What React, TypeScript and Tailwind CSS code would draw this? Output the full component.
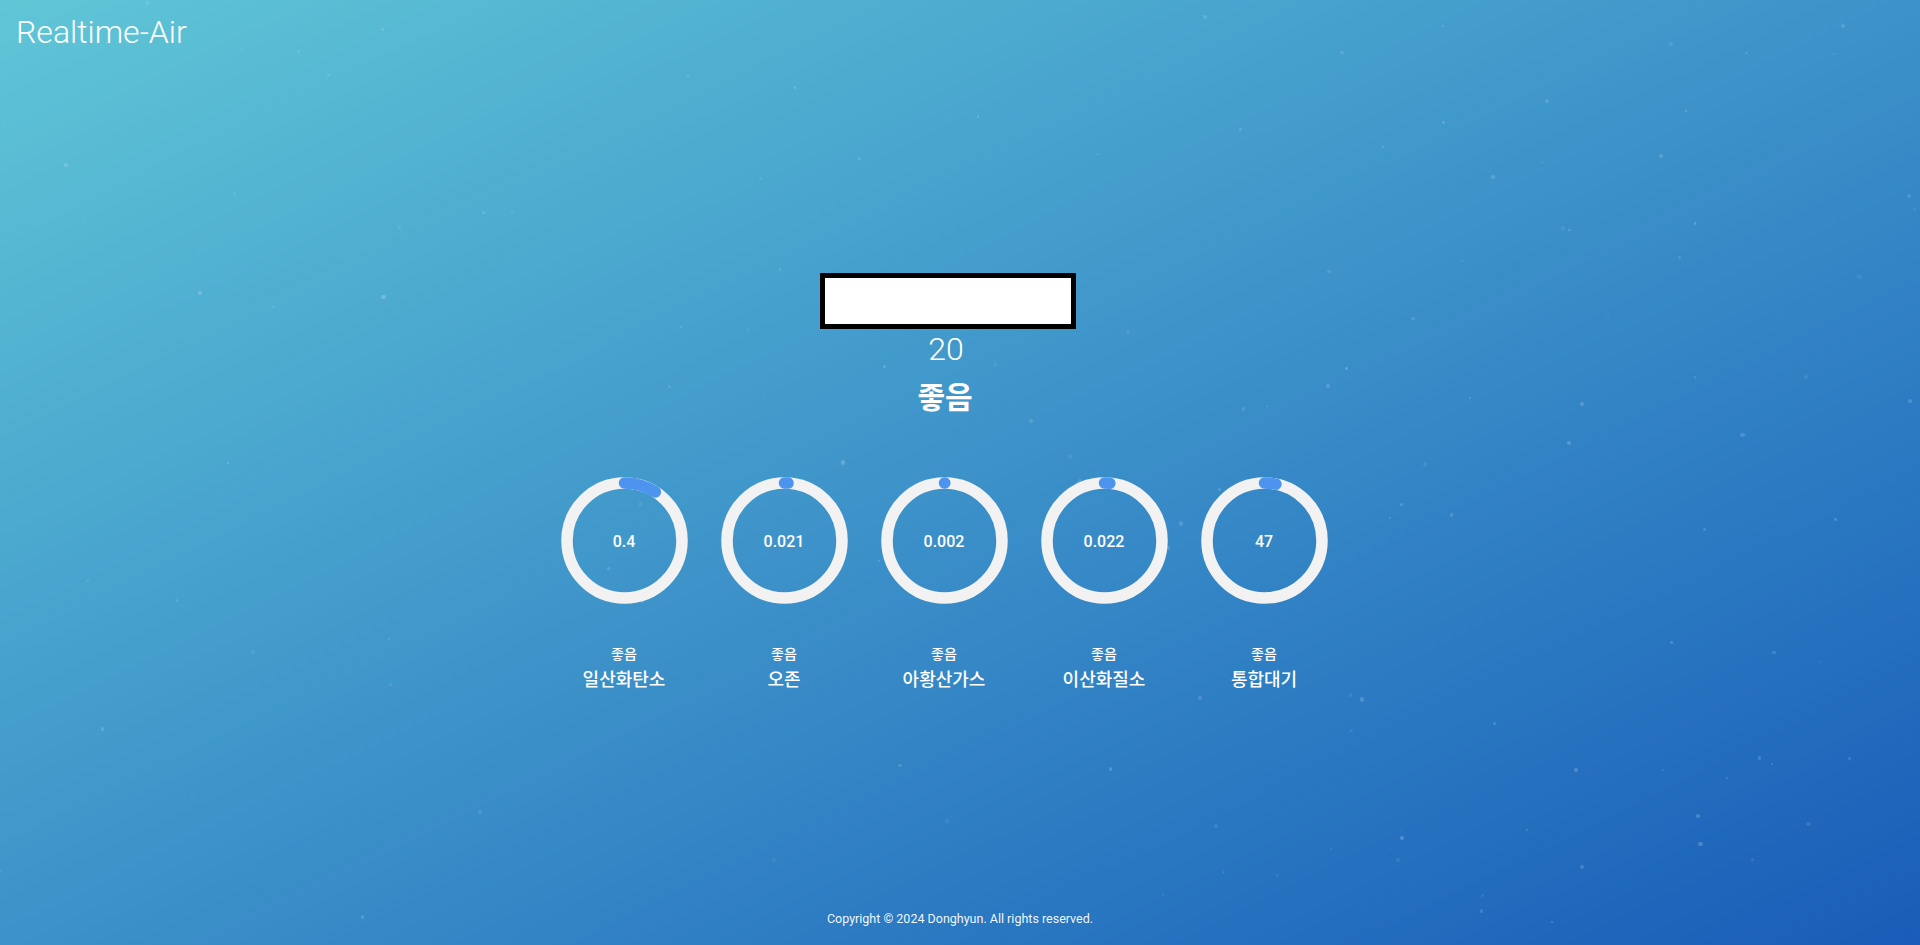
import React from 'react';

type Pollutant = {
    name: string;
    value: string;
    grade: string;
    ratio: number;
};

const pollutants: Pollutant[] = [
    { name: '일산화탄소', value: '0.4', grade: '좋음', ratio: 0.09 },
    { name: '오존', value: '0.021', grade: '좋음', ratio: 0.01 },
    { name: '아황산가스', value: '0.002', grade: '좋음', ratio: 0.001 },
    { name: '이산화질소', value: '0.022', grade: '좋음', ratio: 0.015 },
    { name: '통합대기', value: '47', grade: '좋음', ratio: 0.032 },
];

// background speckles, seeded so every render looks the same
function makeSpecks(count: number) {
    let seed = 7;
    const rand = () => {
        seed = (seed * 16807) % 2147483647;
        return (seed - 1) / 2147483646;
    };
    return Array.from({ length: count }, () => ({
        left: rand() * 100,
        top: rand() * 100,
        size: 1.5 + rand() * 3,
        opacity: 0.06 + rand() * 0.14,
    }));
}

const specks = makeSpecks(140);

function Gauge({ item }: { item: Pollutant }) {
    const r = 57.5;
    const c = 2 * Math.PI * r;
    const len = Math.max(item.ratio * c, 0.3);
    return (
        <div className="flex flex-col items-center w-[127px]">
            <div className="grid w-[127px] h-[127px]">
                <svg width="127" height="127" viewBox="0 0 127 127" className="[grid-area:1/1]">
                    <circle cx="63.5" cy="63.5" r={r} fill="none" stroke="#f2f2f2" strokeWidth="11.5" />
                    <circle
                        cx="63.5"
                        cy="63.5"
                        r={r}
                        fill="none"
                        stroke="#4d94ee"
                        strokeWidth="11.5"
                        strokeLinecap="round"
                        strokeDasharray={`${len} ${c}`}
                        transform="rotate(-90 63.5 63.5)"
                    />
                </svg>
                <div className="[grid-area:1/1] flex items-center justify-center text-white text-base font-medium pt-[3px]">
                    {item.value}
                </div>
            </div>
            <p className="mt-10 text-sm leading-5 font-medium text-white">{item.grade}</p>
            <p className="mt-0.5 text-lg leading-7 font-medium text-white whitespace-nowrap">{item.name}</p>
        </div>
    );
}

export default function App() {
    return (
        <div className="relative h-screen overflow-hidden flex flex-col bg-linear-to-br from-[#60c6d6] via-[#3d92c9] to-[#1a5cb8] font-['Roboto','Noto_Sans_CJK_KR',sans-serif]">
            {/* speckles */}
            <div className="pointer-events-none absolute inset-0">
                {specks.map((s, i) => (
                    <span
                        key={i}
                        className="absolute rounded-full bg-white blur-[0.5px]"
                        style={{ left: `${s.left}%`, top: `${s.top}%`, width: s.size, height: s.size, opacity: s.opacity }}
                    />
                ))}
            </div>

            {/* Header */}
            <header className="relative px-4 pt-4">
                <h1 className="text-[32px] leading-none font-light text-white">Realtime-Air</h1>
            </header>

            {/* Main */}
            <main className="relative flex flex-col items-center pt-[225px] pr-[32px]">
                <div className="ml-[8px] w-[256px] h-[56px] bg-white border-[5px] border-black" />
                <p className="ml-[4px] mt-1 text-[32px] leading-none font-light text-white">20</p>
                <p className="ml-[2px] mt-[18px] text-[30px] leading-none font-bold text-white">좋음</p>

                <div className="mt-16 flex gap-[33px]">
                    {pollutants.map((p) => (
                        <Gauge key={p.name} item={p} />
                    ))}
                </div>
            </main>

            {/* Footer */}
            <footer className="relative mt-auto pb-4 text-center text-[12.5px] leading-5 text-white/95">
                Copyright © 2024 Donghyun. All rights reserved.
            </footer>
        </div>
    );
}
